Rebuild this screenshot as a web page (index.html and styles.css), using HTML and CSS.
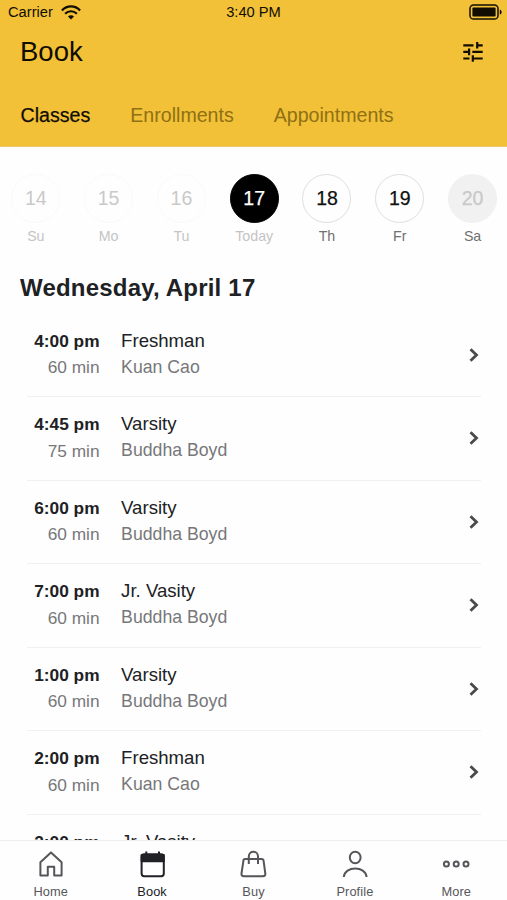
FILE: index.html
```html
<!DOCTYPE html>
<html lang="en">
<head>
<meta charset="utf-8">
<title>Book</title>
<link rel="stylesheet" href="styles.css">
</head>
<body>
<div class="app">
  <header class="header">
    <div class="status">
      <div class="carrier"><span>Carrier</span>
        <svg width="20" height="15" viewBox="0 0 20 15" fill="none" stroke="#110d02" stroke-width="2.2"><path d="M.9 5.4C6-.1 14-.1 19.1 5.4M4.1 8.8c3.4-3.4 8.4-3.4 11.8 0"/><path d="M7 11.5c1.8-1.6 4.2-1.6 6 0l-3 3z" fill="#110d02" stroke="none"/></svg>
      </div>
      <span class="clock">3:40 PM</span>
      <svg class="battery" width="34" height="16" viewBox="0 0 34 16"><rect x="1" y="1" width="28" height="14" rx="3.6" fill="none" stroke="#110d02" stroke-width="1.5"/><rect x="3.4" y="3.4" width="23.2" height="9.2" rx="1" fill="#110d02"/><path d="M30.8 5.4c2.4.8 2.4 4.4 0 5.2z" fill="#110d02"/></svg>
    </div>
    <div class="title-row">
      <h1>Book</h1>
      <svg width="20" height="20" viewBox="0 0 20 20" fill="none" stroke="#110d02" stroke-width="2.2"><path d="M.3 3.3h10.2M14.2 0v6.6M14.2 3.3h5.5M.3 9.9h5.8M6.1 6.6v6.6M9.3 9.9h10.4M.3 16.5h6.2M9.8 13.2v6.6M9.8 16.5h9.9"/></svg>
    </div>
    <nav class="tabs"><span class="tab active">Classes</span><span class="tab">Enrollments</span><span class="tab">Appointments</span></nav>
  </header>
  <section class="week">
    <div class="day past"><span class="num">14</span><span class="name">Su</span></div>
    <div class="day past"><span class="num">15</span><span class="name">Mo</span></div>
    <div class="day past"><span class="num">16</span><span class="name">Tu</span></div>
    <div class="day today"><span class="num">17</span><span class="name">Today</span></div>
    <div class="day"><span class="num">18</span><span class="name">Th</span></div>
    <div class="day"><span class="num">19</span><span class="name">Fr</span></div>
    <div class="day closed"><span class="num">20</span><span class="name">Sa</span></div>
  </section>
  <main class="schedule">
    <h2>Wednesday, April 17</h2>
    <ul class="list">
      <li class="row"><div class="when"><b>4:00 pm</b><span>60 min</span></div><div class="what"><strong>Freshman</strong><span>Kuan Cao</span></div><svg class="chevron" viewBox="0 0 10 14"><path d="M1.5 1.2 7.5 7l-6 5.8"/></svg></li>
      <li class="row"><div class="when"><b>4:45 pm</b><span>75 min</span></div><div class="what"><strong>Varsity</strong><span>Buddha Boyd</span></div><svg class="chevron" viewBox="0 0 10 14"><path d="M1.5 1.2 7.5 7l-6 5.8"/></svg></li>
      <li class="row"><div class="when"><b>6:00 pm</b><span>60 min</span></div><div class="what"><strong>Varsity</strong><span>Buddha Boyd</span></div><svg class="chevron" viewBox="0 0 10 14"><path d="M1.5 1.2 7.5 7l-6 5.8"/></svg></li>
      <li class="row"><div class="when"><b>7:00 pm</b><span>60 min</span></div><div class="what"><strong>Jr. Vasity</strong><span>Buddha Boyd</span></div><svg class="chevron" viewBox="0 0 10 14"><path d="M1.5 1.2 7.5 7l-6 5.8"/></svg></li>
      <li class="row"><div class="when"><b>1:00 pm</b><span>60 min</span></div><div class="what"><strong>Varsity</strong><span>Buddha Boyd</span></div><svg class="chevron" viewBox="0 0 10 14"><path d="M1.5 1.2 7.5 7l-6 5.8"/></svg></li>
      <li class="row"><div class="when"><b>2:00 pm</b><span>60 min</span></div><div class="what"><strong>Freshman</strong><span>Kuan Cao</span></div><svg class="chevron" viewBox="0 0 10 14"><path d="M1.5 1.2 7.5 7l-6 5.8"/></svg></li>
      <li class="row"><div class="when"><b>2:00 pm</b></div><div class="what"><strong>Jr. Vasity</strong></div></li>
    </ul>
  </main>
  <nav class="bottom">
    <a class="item"><svg viewBox="0 0 28 28"><path d="M3.4 12.2 14 2.4l10.6 9.8v13.2H17.2v-8.6h-6.4v8.6H3.4z"/></svg><span>Home</span></a>
    <a class="item current"><svg viewBox="0 0 28 28"><rect x="3.6" y="4.3" width="22.2" height="21.9" rx="2.6"/><path d="M3.6 5h22.2v6.2H3.6z" fill="#202126"/><path d="M8.3 1.6v4M21 1.6v4"/></svg><span>Book</span></a>
    <a class="item"><svg viewBox="0 0 28 28"><path d="M6.2 9h16.4q1.8 0 2 1.8l1.7 12.7q.3 2.7-2.4 2.7h-19q-2.7 0-2.4-2.7l1.9-12.7Q4.4 9 6.2 9zM9.8 14V6.5c0-6.4 9.2-6.4 9.2 0V14"/></svg><span>Buy</span></a>
    <a class="item"><svg viewBox="0 0 28 28"><ellipse cx="14.2" cy="7.5" rx="5.4" ry="5.8"/><path d="M2.8 27c1-11.2 21.8-11.2 22.8 0"/></svg><span>Profile</span></a>
    <a class="item"><svg viewBox="0 0 28 28"><circle cx="4.4" cy="13.9" r="2.5"/><circle cx="14.2" cy="13.9" r="2.5"/><circle cx="24" cy="13.9" r="2.5"/></svg><span>More</span></a>
  </nav>
</div>
</body>
</html>
```

FILE: styles.css
```css
* { box-sizing: border-box; }
body { margin: 0; background: #fefefe; color: #202124; font-family: "Liberation Sans", Arial, sans-serif; }
h1, h2, ul { margin: 0; padding: 0; }
svg { display: block; flex: none; }
.app { display: flex; flex-direction: column; height: 900px; overflow: hidden; }

.header { flex: none; height: 147px; background: #f2c137; color: #110d02; border-bottom: 1px solid #e8c66c; }
.status { display: grid; grid-template-columns: 1fr auto 1fr; align-items: center; height: 24px; padding: 0 4px 0 8px; font-size: 14.7px; }
.carrier { display: flex; align-items: center; gap: 8px; }
.clock { margin-left: -4px; }
.battery { justify-self: end; }
.title-row { display: flex; align-items: center; justify-content: space-between; height: 55px; padding: 0 24px 0 20px; }
h1 { font-size: 27.5px; font-weight: 400; line-height: 55px; }
.tabs { display: flex; gap: 40px; padding: 24px 20.6px 0; font-size: 19.6px; line-height: 24px; }
.tab { color: #8f7015; }
.tab.active { color: #110d02; -webkit-text-stroke: .25px; }

.week { flex: none; display: grid; grid-template-columns: repeat(7, 72.8px); margin: 27px -3px 0 -.6px; }
.day { display: flex; flex-direction: column; align-items: center; }
.num { width: 49px; height: 49px; border: 1px solid #dedede; border-radius: 50%; font-size: 19.5px; line-height: 47px; text-align: center; color: #111; -webkit-text-stroke: .25px; }
.name { margin-top: 4px; font-size: 14.2px; line-height: 18px; color: #707070; }
.past .num { border-color: #fafafa; color: #c9c9c9; -webkit-text-stroke: 0; }
.past .name, .today .name { color: #c4c4c4; }
.today .num { background: #000; border-color: #000; color: #fff; }
.closed .num { background: #f1f1f1; border-color: #f1f1f1; color: #c9c9c9; }

.schedule { flex: 1; min-height: 0; overflow: hidden; padding: 28px 26px 0 20px; }
h2 { font-size: 24px; line-height: 30px; letter-spacing: .2px; }
.list { list-style: none; padding: 10.5px 0 0 7px; }
.row { display: flex; height: 83.5px; padding: 14px 1px 0 0; border-bottom: 1px solid #f0f0f0; }
.when { width: 72.5px; display: flex; flex-direction: column; align-items: flex-end; font-size: 17.3px; line-height: 26.5px; }
.when span { color: #77777a; }
.what { flex: 1; padding-left: 21.6px; display: flex; flex-direction: column; font-size: 17.7px; line-height: 26px; }
.what strong { font-size: 18.6px; font-weight: 400; line-height: 26px; }
.what span { color: #77777a; }
.chevron { width: 10px; height: 14px; margin: 20px 1px 0 0; fill: none; stroke: #4a4a4a; stroke-width: 2.8; }

.bottom { flex: none; height: 60px; display: grid; grid-template-columns: repeat(5, 1fr); background: #fefefe; border-top: 1px solid #eee; }
.item { display: flex; flex-direction: column; align-items: center; padding-top: 9px; color: #56575a; font-size: 12.8px; line-height: 16px; letter-spacing: .1px; }
.item svg { width: 28px; height: 28px; margin-bottom: 6px; fill: none; stroke: #55565a; stroke-width: 2; stroke-linejoin: round; }
.current { color: #202126; }
.current svg { stroke: #202126; }
```
